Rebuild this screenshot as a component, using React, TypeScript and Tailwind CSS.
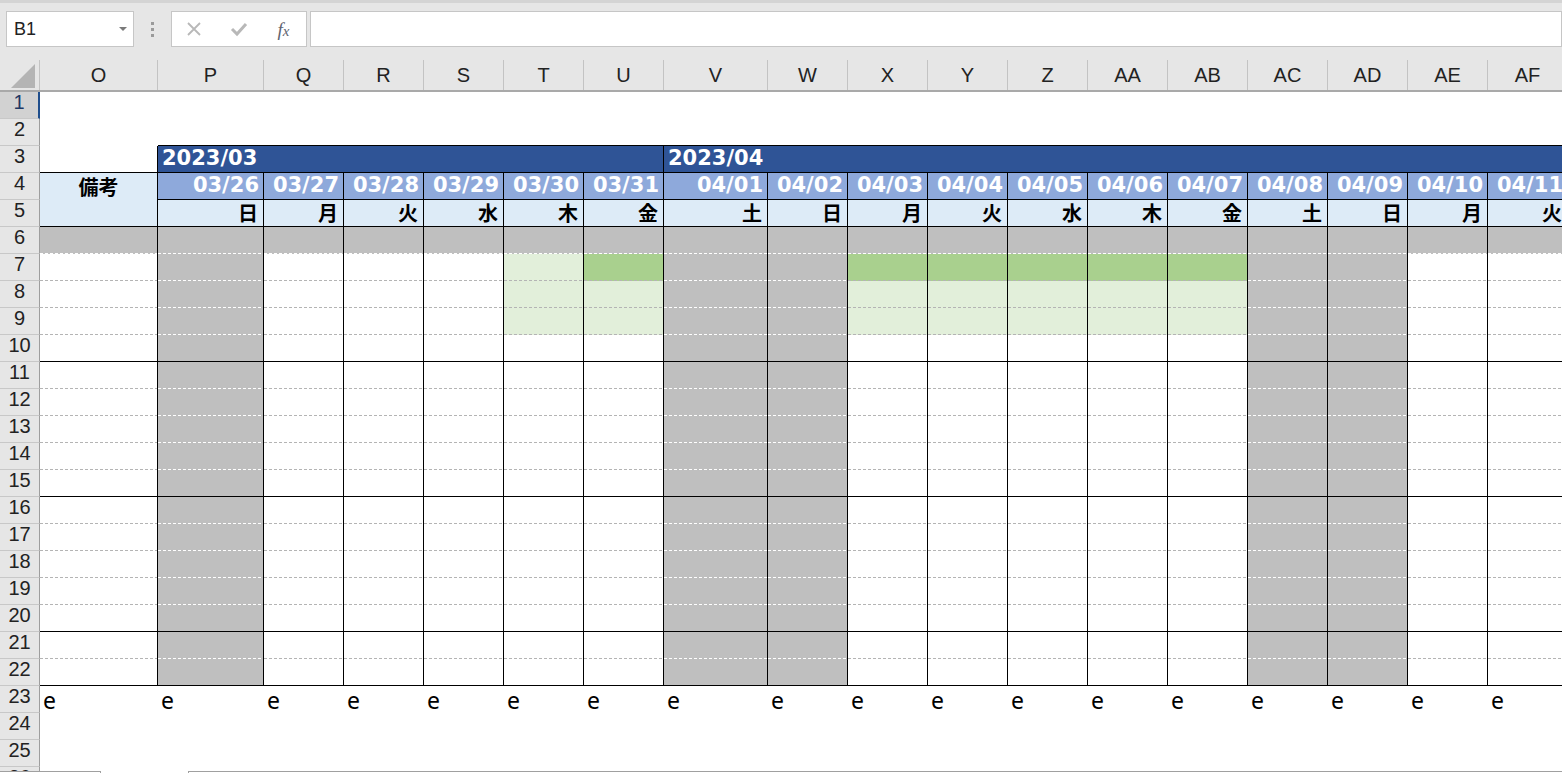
import React from 'react';

type Col = {
  key: string;
  w: string;
  date: string;
  dow: string;
  off?: boolean;
  green7?: 'dark' | 'light';
  green89?: boolean;
};

const COLS: Col[] = [
  { key: 'P', w: 'w-[106px]', date: '03/26', dow: '日', off: true },
  { key: 'Q', w: 'w-[80px]', date: '03/27', dow: '月' },
  { key: 'R', w: 'w-[80px]', date: '03/28', dow: '火' },
  { key: 'S', w: 'w-[80px]', date: '03/29', dow: '水' },
  { key: 'T', w: 'w-[80px]', date: '03/30', dow: '木', green7: 'light', green89: true },
  { key: 'U', w: 'w-[80px]', date: '03/31', dow: '金', green7: 'dark', green89: true },
  { key: 'V', w: 'w-[104px]', date: '04/01', dow: '土', off: true },
  { key: 'W', w: 'w-[80px]', date: '04/02', dow: '日', off: true },
  { key: 'X', w: 'w-[80px]', date: '04/03', dow: '月', green7: 'dark', green89: true },
  { key: 'Y', w: 'w-[80px]', date: '04/04', dow: '火', green7: 'dark', green89: true },
  { key: 'Z', w: 'w-[80px]', date: '04/05', dow: '水', green7: 'dark', green89: true },
  { key: 'AA', w: 'w-[80px]', date: '04/06', dow: '木', green7: 'dark', green89: true },
  { key: 'AB', w: 'w-[80px]', date: '04/07', dow: '金', green7: 'dark', green89: true },
  { key: 'AC', w: 'w-[80px]', date: '04/08', dow: '土', off: true },
  { key: 'AD', w: 'w-[80px]', date: '04/09', dow: '日', off: true },
  { key: 'AE', w: 'w-[80px]', date: '04/10', dow: '月' },
  { key: 'AF', w: 'w-[80px]', date: '04/11', dow: '火' },
];

const SOLID = [10, 15, 20, 22];
const GRAY = 'bg-[#bfbfbf]';

function bgFor(row: number, c: Col) {
  if (row === 6 || c.off) return GRAY;
  if (row === 7 && c.green7 === 'dark') return 'bg-[#a9d08e]';
  if ((row === 7 && c.green7 === 'light') || ((row === 8 || row === 9) && c.green89)) return 'bg-[#e2efda]';
  return 'bg-white';
}

// bottom edge of a body cell: solid black between blocks, dotted hairline otherwise
function Edge({ row, gray }: { row: number; gray: boolean }) {
  if (SOLID.includes(row)) return <div className="h-full border-b border-black" />;
  return (
    <div className="h-full flex flex-col justify-end">
      <div
        className={
          gray
            ? 'h-px bg-[repeating-linear-gradient(90deg,#ffffff_0_3px,transparent_3px_5px)]'
            : 'h-px bg-[repeating-linear-gradient(90deg,#b4b4b4_0_3px,transparent_3px_5px)]'
        }
      />
    </div>
  );
}

function RowHead({ n, active }: { n: number; active?: boolean }) {
  return (
    <div
      className={
        active
          ? 'w-[40px] shrink-0 flex items-center justify-center pb-[7px] border-b border-b-[#c8c8c8] border-r-2 border-r-[#1f4e8c] bg-[#d2d2d2] text-[20px] leading-none text-[#1f3864]'
          : 'w-[40px] shrink-0 flex items-center justify-center pb-[7px] border-b border-b-[#c8c8c8] border-r border-r-[#9e9e9e] bg-[#e6e6e6] text-[20px] leading-none text-[#222]'
      }
    >
      {n}
    </div>
  );
}

function Toolbar() {
  return (
    <div className="h-[60px]">
      <div className="h-[3px] bg-[#d4d4d4]" />
      <div className="flex items-center h-[36px] mt-[8px] pl-[6px]">
        <div className="w-[128px] h-full bg-white border border-[#c6c6c6] flex items-center pl-[7px] pr-[6px]">
          <span className="text-[18px] text-[#222] flex-1">B1</span>
          <svg width="8" height="5" viewBox="0 0 8 5">
            <polygon points="0,0 8,0 4,4" fill="#7a7a7a" />
          </svg>
        </div>
        <div className="w-[37px] flex flex-col items-center gap-[3px]">
          <span className="w-[3px] h-[3px] bg-[#9a9a9a]" />
          <span className="w-[3px] h-[3px] bg-[#9a9a9a]" />
          <span className="w-[3px] h-[3px] bg-[#9a9a9a]" />
        </div>
        <div className="w-[136px] h-full bg-white border border-[#c6c6c6] flex items-center">
          <div className="w-[44px] flex justify-center">
            <svg width="16" height="16" viewBox="0 0 16 16">
              <path d="M2 2 L14 14 M14 2 L2 14" stroke="#b8b8b8" strokeWidth="1.8" />
            </svg>
          </div>
          <div className="w-[45px] flex justify-center">
            <svg width="18" height="16" viewBox="0 0 18 16">
              <path d="M2 8 L7 13 L16 3" stroke="#b8b8b8" strokeWidth="3" fill="none" />
            </svg>
          </div>
          <div className="w-[45px] flex justify-center">
            <span className="font-['Liberation_Serif',serif] italic text-[19px] text-[#5f6470] leading-none">
              f<span className="text-[15px]">x</span>
            </span>
          </div>
        </div>
        <div className="flex-1 h-full ml-[3px] bg-white border border-[#c6c6c6]" />
      </div>
    </div>
  );
}

function ColumnHeader() {
  return (
    <div className="flex h-[32px] border-b-2 border-b-[#a9a9a9] bg-[#e6e6e6]">
      <div className="w-[40px] shrink-0 h-full border-r border-r-[#c3c3c3] flex items-end justify-end pr-[4px] pb-[2px]">
        <svg width="24" height="24" viewBox="0 0 24 24">
          <polygon points="24,0 24,24 0,24" fill="#b4b4b4" />
        </svg>
      </div>
      <div className="w-[118px] shrink-0 h-full border-r border-r-[#c3c3c3] flex items-center justify-center text-[20px] text-[#222]">
        O
      </div>
      {COLS.map((c) => (
        <div
          key={c.key}
          className={`${c.w} shrink-0 h-full border-r border-r-[#c3c3c3] flex items-center justify-center text-[20px] text-[#222]`}
        >
          {c.key}
        </div>
      ))}
    </div>
  );
}

export default function App() {
  const body = Array.from({ length: 17 }, (_, i) => i + 6);

  return (
    <div className="relative w-[1562px] h-[773px] overflow-hidden bg-[#e6e6e6] font-['Liberation_Sans',sans-serif]">
      <Toolbar />
      <ColumnHeader />

      <div className="bg-white">
        {/* row 1-2 */}
        <div className="flex h-[27px]">
          <RowHead n={1} active />
          <div className="flex-1" />
        </div>
        <div className="flex h-[27px]">
          <RowHead n={2} />
          <div className="w-[118px] shrink-0" />
          <div className="flex-1 border-b border-black" />
        </div>

        {/* row 3: months */}
        <div className="flex h-[27px]">
          <RowHead n={3} />
          <div className="w-[118px] shrink-0 border-r border-b border-black" />
          <div className="w-[506px] shrink-0 bg-[#2f5496] border-r border-b border-black flex items-center pl-[4px] font-['DejaVu_Sans',sans-serif] font-bold text-[21px] text-white">
            2023/03
          </div>
          <div className="w-[904px] shrink-0 bg-[#2f5496] border-r border-b border-black flex items-center pl-[4px] font-['DejaVu_Sans',sans-serif] font-bold text-[21px] text-white">
            2023/04
          </div>
        </div>

        {/* row 4: dates */}
        <div className="flex h-[27px]">
          <RowHead n={4} />
          <div className="w-[118px] shrink-0 bg-[#ddebf7] border-r border-black flex items-center justify-center font-['Noto_Sans_CJK_JP',sans-serif] font-bold text-[20px] text-black">
            備考
          </div>
          {COLS.map((c) => (
            <div
              key={c.key}
              className={`${c.w} shrink-0 bg-[#8ea9db] border-r border-b border-black flex items-center justify-end pr-[4px] font-['DejaVu_Sans',sans-serif] font-bold text-[21px] text-white whitespace-nowrap`}
            >
              {c.date}
            </div>
          ))}
        </div>

        {/* row 5: weekdays */}
        <div className="flex h-[27px]">
          <RowHead n={5} />
          <div className="w-[118px] shrink-0 bg-[#ddebf7] border-r border-b border-black" />
          {COLS.map((c) => (
            <div
              key={c.key}
              className={`${c.w} shrink-0 bg-[#ddebf7] border-r border-b border-black flex items-center justify-end pr-[5px] font-['Noto_Sans_CJK_JP',sans-serif] font-bold text-[20px] leading-none text-black`}
            >
              {c.dow}
            </div>
          ))}
        </div>

        {/* rows 6-22 */}
        {body.map((row) => (
          <div key={row} className="flex h-[27px]">
            <RowHead n={row} />
            <div className={`w-[118px] shrink-0 border-r border-black ${row === 6 ? GRAY : 'bg-white'}`}>
              <Edge row={row} gray={row === 6} />
            </div>
            {COLS.map((c) => {
              const bg = bgFor(row, c);
              return (
                <div key={c.key} className={`${c.w} shrink-0 border-r border-black ${bg}`}>
                  <Edge row={row} gray={bg === GRAY} />
                </div>
              );
            })}
          </div>
        ))}

        {/* row 23 */}
        <div className="flex h-[27px]">
          <RowHead n={23} />
          <div className="w-[118px] shrink-0 flex items-end pl-[3px] pb-[2px] font-['Noto_Sans',sans-serif] text-[23px] leading-[22px] text-black">
            e
          </div>
          {COLS.map((c) => (
            <div
              key={c.key}
              className={`${c.w} shrink-0 flex items-end pl-[3px] pb-[2px] font-['Noto_Sans',sans-serif] text-[23px] leading-[22px] text-black`}
            >
              e
            </div>
          ))}
        </div>

        {[24, 25, 26].map((row) => (
          <div key={row} className="flex h-[27px]">
            <RowHead n={row} />
            <div className="flex-1" />
          </div>
        ))}
      </div>

      {/* sheet tab strip edge */}
      <div className="absolute left-0 right-0 bottom-0 h-[2px] flex">
        <div className="w-[101px] bg-white border-t border-r border-[#a0a0a0]" />
        <div className="w-[87px] bg-white" />
        <div className="flex-1 bg-white border-t border-l border-[#a0a0a0]" />
      </div>
    </div>
  );
}
